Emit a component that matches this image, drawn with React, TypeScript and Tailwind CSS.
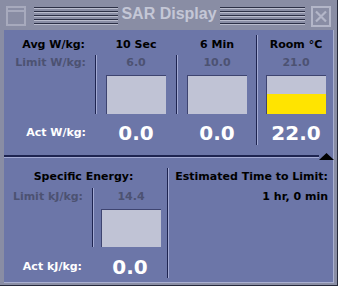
import React from 'react';

const dark = 'bg-[#1e2450]';

const Grip: React.FC<{ w: string }> = ({ w }) => (
  <div className={`flex flex-col gap-[2px] ${w}`}>
    {[0, 1, 2, 3, 4].map((i) => (
      <div key={i} className="h-[2px] border-t border-[#2c3046] border-b border-b-[#b9bccd]" />
    ))}
  </div>
);

const VLine: React.FC<{ className?: string }> = ({ className = '' }) => (
  <div className={`flex shrink-0 ${className}`}>
    <div className={`w-px ${dark}`} />
    <div className="w-px bg-[#a3aad3]" />
  </div>
);

const Bar: React.FC<{ h: string; fill?: number }> = ({ h, fill = 0 }) => (
  <div className={`relative w-[60px] ${h} bg-[#c0c3d5] border-t border-l border-[#3e4470] flex flex-col justify-end`}>
    {fill > 0 && <div className="bg-[#ffe400]" style={{ height: `${fill}px` }} />}
  </div>
);

const Metric: React.FC<{ title: string; limit: string; value: string; width: string }> = ({
  title,
  limit,
  value,
  width,
}) => (
  <div className={`flex flex-col pt-[6px] ${width}`}>
    <div className="h-[18px] leading-[18px] pl-[11px] w-[71px] text-center text-[11px] font-bold text-black">
      {title}
    </div>
    <div className="flex">
      <VLine className="mt-px" />
      <div className="ml-[9px] flex flex-col w-[60px]">
        <div className="h-[18px] leading-[18px] text-center text-[11px] font-bold text-[#4c5272]">{limit}</div>
        <div className="mt-[3px]">
          <Bar h="h-[39px]" />
        </div>
      </div>
    </div>
    <div className="mt-[5px] h-[28px] leading-[28px] pl-[11px] w-[71px] text-center text-[20px] font-bold text-white">
      {value}
    </div>
  </div>
);

export default function App() {
  return (
    <div className="w-[338px] h-[286px] bg-[#898da4] border-r border-b border-[#262a3c] flex flex-col font-['DejaVu_Sans',sans-serif]">
      {/* title bar */}
      <div className="h-[30px] flex items-start pt-[6px] pl-[6px]">
        <svg width="20" height="20" viewBox="0 0 20 20" className="shrink-0">
          <rect x="1" y="1" width="18" height="18" fill="none" stroke="#a7aabd" strokeWidth="2" />
          <line x1="1" y1="5" x2="19" y2="5" stroke="#a7aabd" strokeWidth="2" />
        </svg>
        <div className="ml-[8px] mt-[1px]">
          <Grip w="w-[84px]" />
        </div>
        <div className="w-[102px] text-center font-['Liberation_Sans',sans-serif] font-bold text-[16px] leading-[18px] text-[#c4c7d6] -mt-[1px]">
          SAR Display
        </div>
        <div className="mt-[1px]">
          <Grip w="w-[85px]" />
        </div>
        <svg width="20" height="21" viewBox="0 0 20 21" className="ml-[6px] shrink-0">
          <rect x="1" y="1" width="18" height="19" fill="none" stroke="#b3b6c8" strokeWidth="2" />
          <path d="M5 5.5 L15 15.5 M15 5.5 L5 15.5" stroke="#b3b6c8" strokeWidth="2.2" />
        </svg>
      </div>

      {/* content panel */}
      <div className="ml-[4px] mr-[3px] mb-[2px] h-[253px] bg-[#6c76a8] border-r border-b border-[#a9afd0] flex flex-col">
        {/* top section */}
        <div className="h-[125px] flex">
          <div className="w-[91px] flex flex-col pt-[6px] pr-[9px] text-right text-[11px] font-bold">
            <div className="h-[18px] leading-[18px] text-black pr-px">Avg W/kg:</div>
            <div className="h-[18px] leading-[18px] text-[#4c5272]">Limit W/kg:</div>
            <div className="h-[42px]" />
            <div className="mt-[5px] h-[28px] leading-[28px] text-white">Act W/kg:</div>
          </div>
          <Metric title="10 Sec" limit="6.0" value="0.0" width="w-[81px]" />
          <Metric title="6 Min" limit="10.0" value="0.0" width="w-[80px]" />
          <VLine className="mt-[5px] h-[110px]" />
          <div className="w-[75px] flex flex-col pt-[6px] pl-[8px]">
            <div className="h-[18px] leading-[18px] w-[60px] text-center text-[11px] font-bold text-black whitespace-nowrap">
              Room °C
            </div>
            <div className="h-[18px] leading-[18px] w-[60px] text-center text-[11px] font-bold text-[#4c5272]">
              21.0
            </div>
            <div className="mt-[3px]">
              <Bar h="h-[39px]" fill={20} />
            </div>
            <div className="mt-[5px] h-[28px] leading-[28px] w-[60px] text-center text-[20px] font-bold text-white">
              22.0
            </div>
          </div>
        </div>

        {/* divider with expand arrow */}
        <div className="relative flex flex-col">
          <div className={`h-[2px] mr-[14px] ${dark}`} />
          <div className="h-px mr-[14px] bg-[#a3aad3]" />
          <svg width="15" height="7" viewBox="0 0 15 7" className="absolute -right-px -top-[2px]">
            <polygon points="7.5,0 15,7 0,7" fill="#000" />
          </svg>
        </div>

        {/* bottom section */}
        <div className="flex-1 flex">
          <div className="w-[163px] flex flex-col pt-[10px]">
            <div className="h-[18px] leading-[18px] w-[159px] text-center text-[11px] font-bold text-black">
              Specific Energy:
            </div>
            <div className="flex mt-[2px]">
              <div className="w-[88px] pr-[9px] text-right text-[11px] font-bold">
                <div className="h-[18px] leading-[18px] text-[#4c5272]">Limit kJ/kg:</div>
              </div>
              <VLine />
              <div className="ml-[7px] flex flex-col w-[60px]">
                <div className="h-[18px] leading-[18px] text-center text-[11px] font-bold text-[#4c5272]">14.4</div>
                <div className="mt-[3px]">
                  <Bar h="h-[38px]" />
                </div>
              </div>
            </div>
            <div className="flex mt-[6px] h-[28px] leading-[28px]">
              <div className="w-[88px] pr-[10px] text-right text-[11px] font-bold text-white">Act kJ/kg:</div>
              <div className="ml-[8px] w-[60px] text-center text-[20px] font-bold text-white">0.0</div>
            </div>
          </div>
          <VLine className="mt-[10px] h-[110px]" />
          <div className="flex-1 flex flex-col pt-[10px] pr-[5px] text-right text-[11px] font-bold text-black">
            <div className="h-[18px] leading-[18px] whitespace-nowrap">Estimated Time to Limit:</div>
            <div className="mt-[2px] h-[18px] leading-[18px]">1 hr, 0 min</div>
          </div>
        </div>
      </div>
    </div>
  );
}
